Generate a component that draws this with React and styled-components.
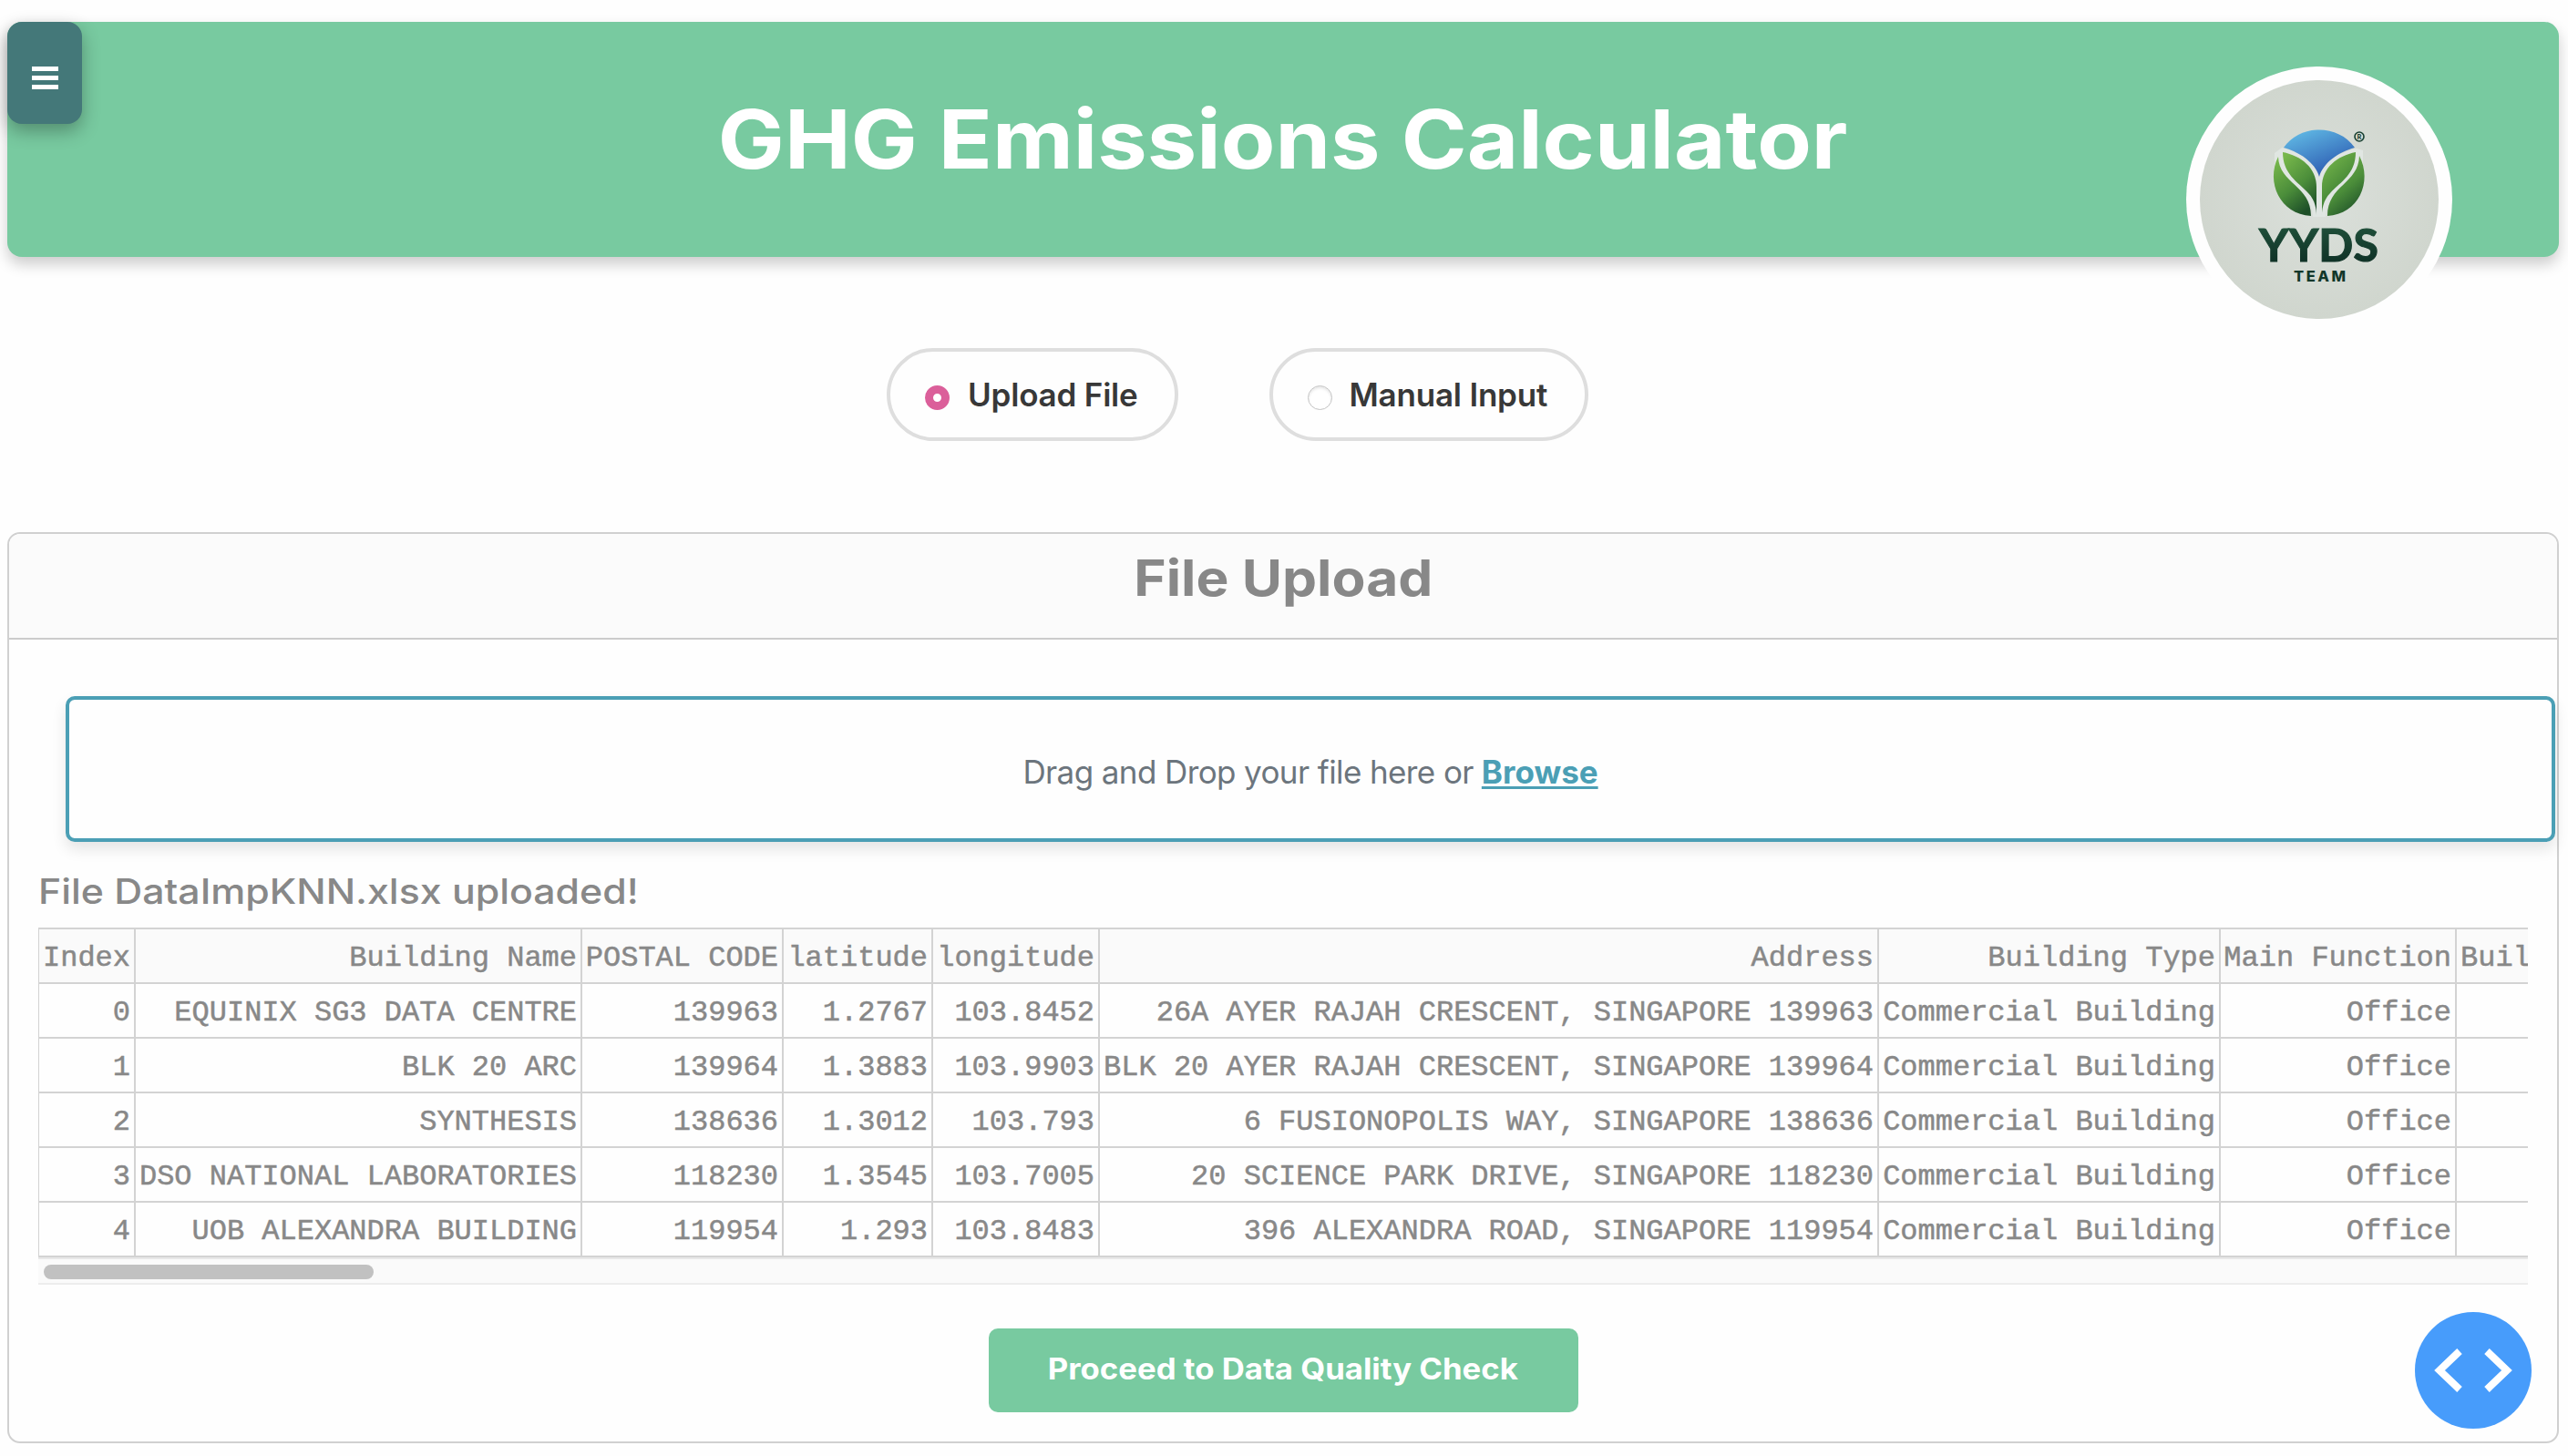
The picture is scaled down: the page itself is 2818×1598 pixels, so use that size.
import React from "react";
import styled, { createGlobalStyle } from "styled-components";

const Global = createGlobalStyle`
  * { box-sizing: border-box; }
  body { margin: 0; background: #fefefe; font-family: Inter, "Liberation Sans", sans-serif; overflow: hidden; }
`;

const Page = styled.main`
  position: relative;
  height: 1598px;
  padding: 24px 10px 0 8px;
`;

const Header = styled.header`
  position: relative;
  height: 258px;
  display: flex;
  justify-content: center;
  align-items: flex-start;
  background: #78caa0;
  border-radius: 16px;
  box-shadow: 0 8px 16px rgba(0, 0, 0, 0.2);
`;

const Title = styled.h1`
  margin: 75px 0 0 0;
  font-size: 89.5px;
  line-height: 108px;
  font-weight: 700;
  transform: scaleX(1.088);
  color: #fff;
  white-space: nowrap;
`;

const MenuButton = styled.button`
  position: absolute;
  left: 0;
  top: 0;
  width: 82px;
  height: 112px;
  padding: 49px 0 0 27px;
  display: flex;
  flex-direction: column;
  gap: 5px;
  border: 0;
  border-radius: 16px;
  background: #447879;
  box-shadow: 0 8px 20px rgba(0, 0, 0, 0.3);
`;

const MenuBar = styled.span`
  width: 29px;
  height: 5px;
  background: #fff;
`;

const Badge = styled.div`
  position: absolute;
  left: 2391px;
  top: 49px;
  width: 292px;
  height: 292px;
  border-radius: 50%;
  background: #fefefe;
`;

const Options = styled.div`
  display: flex;
  gap: 100px;
  margin: 100px 0 0 965px;
`;

const Option = styled.label`
  display: flex;
  align-items: center;
  width: ${(p) => p.$width}px;
  height: 102px;
  padding-left: 38px;
  border: 4px solid #dedede;
  border-radius: 51px;
  color: #383838;
  font-size: 35px;
  font-weight: 600;
  letter-spacing: -0.2px;
  white-space: nowrap;
`;

const Dot = styled.span`
  flex: none;
  width: 27px;
  height: 27px;
  margin: 6px ${(p) => (p.$on ? 20 : 18.5)}px 0 0;
  border-radius: 50%;
  border: ${(p) => (p.$on ? "9px solid #db5f9a" : "1.5px solid #c4c4c4")};
  background: #fff;
  box-shadow: ${(p) => (p.$on ? "none" : "inset 0 2px 3px rgba(0,0,0,0.1)")};
`;

const Card = styled.section`
  height: 1000px;
  margin-top: 100px;
  border: 2px solid #d0d0d0;
  border-radius: 14px;
`;

const CardHeader = styled.div`
  display: flex;
  justify-content: center;
  align-items: flex-start;
  height: 116px;
  padding-top: 14px;
  border-bottom: 2px solid #ccc;
  border-radius: 12px 12px 0 0;
  background: #fbfbfb;
`;

const CardTitle = styled.h2`
  margin: 0;
  font-size: 55px;
  line-height: 68px;
  font-weight: 700;
  transform: scaleX(1.099);
  color: #888;
`;

const Dropzone = styled.div`
  display: flex;
  justify-content: center;
  align-items: center;
  gap: 9px;
  width: 2732px;
  height: 160px;
  margin: 62px 0 0 62px;
  padding-top: 6px;
  border: 4px solid #4b9fb5;
  border-radius: 10px;
  background: #fefefe;
  box-shadow: 0 8px 16px rgba(0, 0, 0, 0.1);
  font-size: 35px;
  letter-spacing: -0.6px;
  color: #6c757d;
`;

const Browse = styled.a`
  color: #4b9fb5;
  font-weight: 700;
  letter-spacing: 0;
  text-decoration: underline;
  text-decoration-thickness: 3px;
  text-underline-offset: 3px;
`;

const Status = styled.p`
  width: fit-content;
  margin: 30px 0 0 32px;
  height: 64px;
  font-size: 38.5px;
  line-height: 48px;
  font-weight: 500;
  transform: scaleX(1.112);
  transform-origin: left;
  color: #888;
  white-space: nowrap;
`;

const TableView = styled.div`
  width: 2732px;
  margin-left: 32px;
  overflow: hidden;
  border-top: 2px solid #d3d3d3;
`;

const Row = styled.div`
  display: grid;
  grid-template-columns: 106px 490px 221px 164px 183px 855px 375px 259px 78px;
  height: 60px;
  border-bottom: 2px solid #d3d3d3;
  border-left: 1px solid #d3d3d3;
  background: ${(p) => (p.$head ? "#fafafa" : "#fefefe")};
`;

const Cell = styled.div`
  padding-right: 4px;
  border-right: 2px solid #d3d3d3;
  font-family: "Liberation Mono", "Courier New", monospace;
  font-size: 32px;
  line-height: 63px;
  height: 58px;
  color: #888;
  -webkit-text-stroke: 0.5px #888;
  text-align: right;
  white-space: pre;

  &:last-child {
    padding: 0 0 0 4px;
    border-right: 0;
    text-align: left;
  }
`;

const ScrollTrack = styled.div`
  height: 30px;
  padding: 6px 0 0 6px;
  border-top: 2px solid #e8e8e8;
  border-bottom: 2px solid #ededed;
  background: #fafafa;
`;

const ScrollThumb = styled.div`
  width: 362px;
  height: 16px;
  border-radius: 8px;
  background: #c1c1c1;
`;

const Proceed = styled.button`
  display: block;
  width: 647px;
  height: 92px;
  margin: 48px auto 0;
  padding: 0 0 4px;
  border: 0;
  border-radius: 10px;
  background: #78caa0;
  color: #fff;
  font-family: Inter, sans-serif;
  font-size: 32px;
  font-weight: 700;
  white-space: nowrap;
`;

const ProceedLabel = styled.span`
  display: inline-block;
  transform: scaleX(1.085);
`;

const DevButton = styled.button`
  position: absolute;
  left: 2650px;
  top: 1440px;
  width: 128px;
  height: 128px;
  padding: 0;
  border: 0;
  border-radius: 50%;
  background: #479cfb;
`;

const columns = ["Index", "Building Name", "POSTAL CODE", "latitude", "longitude", "Address", "Building Type", "Main Function", "Buil"];
const rows = [
  ["0", "EQUINIX SG3 DATA CENTRE", "139963", "1.2767", "103.8452", "26A AYER RAJAH CRESCENT, SINGAPORE 139963"],
  ["1", "BLK 20 ARC", "139964", "1.3883", "103.9903", "BLK 20 AYER RAJAH CRESCENT, SINGAPORE 139964"],
  ["2", "SYNTHESIS", "138636", "1.3012", "103.793", "6 FUSIONOPOLIS WAY, SINGAPORE 138636"],
  ["3", "DSO NATIONAL LABORATORIES", "118230", "1.3545", "103.7005", "20 SCIENCE PARK DRIVE, SINGAPORE 118230"],
  ["4", "UOB ALEXANDRA BUILDING", "119954", "1.293", "103.8483", "396 ALEXANDRA ROAD, SINGAPORE 119954"],
];

function Logo() {
  return (
    <svg width="292" height="292" viewBox="0 0 292 292">
      <defs>
        <radialGradient id="disc">
          <stop offset="0" stopColor="#dbe0db" />
          <stop offset="1" stopColor="#d0d6ce" />
        </radialGradient>
        <linearGradient id="sky" x1="0" y1="0" x2="0.6" y2="1">
          <stop offset="0" stopColor="#66c3ea" />
          <stop offset="1" stopColor="#2b59b0" />
        </linearGradient>
        <linearGradient id="leaf" x1="0.2" y1="0" x2="0.7" y2="1">
          <stop offset="0" stopColor="#77b74b" />
          <stop offset="0.55" stopColor="#4b8d3a" />
          <stop offset="1" stopColor="#1d4f28" />
        </linearGradient>
        <linearGradient id="ink" x1="0" y1="0" x2="0" y2="1">
          <stop offset="0" stopColor="#23573f" />
          <stop offset="1" stopColor="#0c2b22" />
        </linearGradient>
      </defs>
      <circle cx="146" cy="146" r="131" fill="url(#disc)" />
      <path d="M97 95V103C98 130 139 134 139 165H153C153 134 194 130 194 103V92L187 90C168 94 149 104 146 123C142 104 124 93 105 89Z" fill="#e0e6e2" />
      <path d="M107 89C125 63 167 63 185 89C167 94 150 106 146 121C142 106 125 94 107 89Z" fill="url(#sky)" />
      <path d="M106 94C126 98 143 111 143 132V163C143 158 142 147 134 139C122 126 106 118 106 94Z" fill="url(#leaf)" />
      <path d="M186 94C166 98 149 111 149 132V163C149 158 150 147 158 139C170 126 186 118 186 94Z" fill="url(#leaf)" />
      <path d="M101 99C102 129 137 130 137 164C103 162 87 127 101 99Z" fill="url(#leaf)" />
      <path d="M190 98C189 129 155 130 155 164C189 162 205 127 190 98Z" fill="url(#leaf)" />
      <circle cx="190" cy="77" r="5" fill="none" stroke="#173f31" strokeWidth="1.6" />
      <text x="190" y="80" textAnchor="middle" fontFamily="Lato, sans-serif" fontWeight="900" fontSize="7.5" fill="#173f31">R</text>
      <text x="80" y="213.500" textLength="131" fontFamily="Lato, sans-serif" fontWeight="700" fontSize="50" fill="url(#ink)" stroke="url(#ink)" strokeWidth="1.2">YYDS</text>
      <text x="118" y="236.300" textLength="57" fontFamily="Inter, sans-serif" fontWeight="800" fontSize="16.500" fill="#12372a">TEAM</text>
    </svg>
  );
}

export default function App() {
  return (
    <>
      <Global />
      <Page>
        <Header>
          <Title>GHG Emissions Calculator</Title>
          <MenuButton aria-label="Menu">
            <MenuBar /><MenuBar /><MenuBar />
          </MenuButton>
          <Badge><Logo /></Badge>
        </Header>
        <Options>
          <Option $width={320}><Dot $on />Upload File</Option>
          <Option $width={350}><Dot />Manual Input</Option>
        </Options>
        <Card>
          <CardHeader><CardTitle>File Upload</CardTitle></CardHeader>
          <Dropzone>
            <span>Drag and Drop your file here or</span>
            <Browse>Browse</Browse>
          </Dropzone>
          <Status>File DataImpKNN.xlsx uploaded!</Status>
          <TableView>
            <Row $head>
              {columns.map((c) => <Cell key={c}>{c}</Cell>)}
            </Row>
            {rows.map((r) => (
              <Row key={r[0]}>
                {[...r, "Commercial Building", "Office", ""].map((v, i) => <Cell key={i}>{v}</Cell>)}
              </Row>
            ))}
            <ScrollTrack><ScrollThumb /></ScrollTrack>
          </TableView>
          <Proceed><ProceedLabel>Proceed to Data Quality Check</ProceedLabel></Proceed>
        </Card>
        <DevButton aria-label="Developer tools">
          <svg width="128" height="128" viewBox="0 0 128 128" fill="none" stroke="#fff" strokeWidth="8">
            <path d="M49 43L27 64L49 85M79 43L101 64L79 85" />
          </svg>
        </DevButton>
      </Page>
    </>
  );
}
